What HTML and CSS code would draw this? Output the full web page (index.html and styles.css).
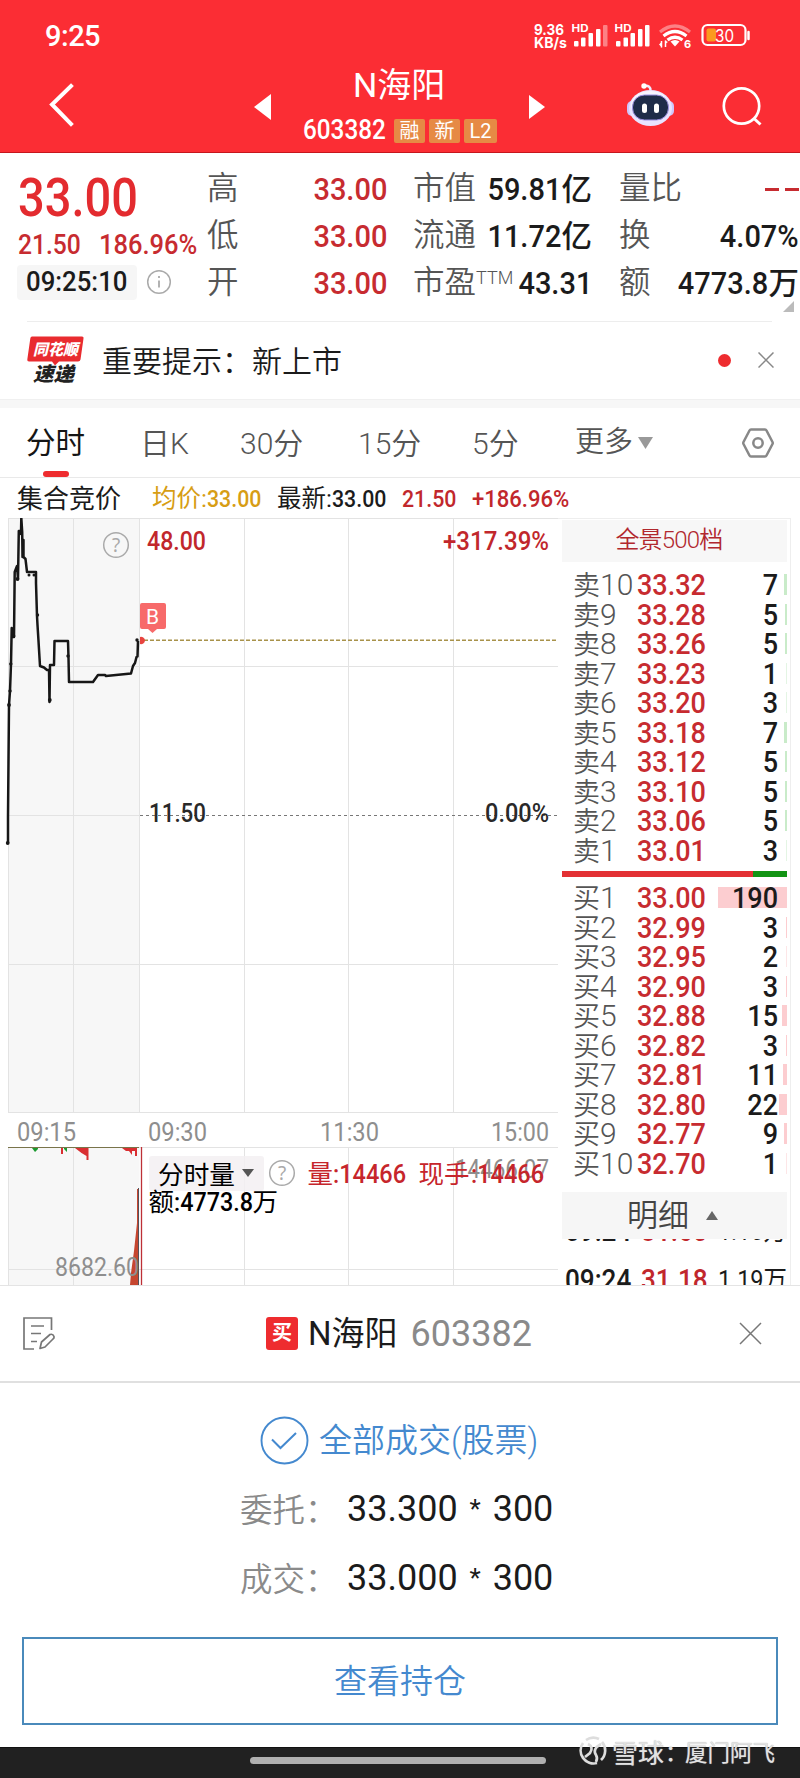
FILE: index.html
```html
<!DOCTYPE html>
<html lang="zh-CN">
<head>
<meta charset="utf-8">
<title>N海阳 603382</title>
<link rel="stylesheet" href="styles.css">
</head>
<body>
<header class="top">
  <div class="status">
    <span class="clock">9:25</span>
    <svg class="status-icons" width="220" height="32" viewBox="532 20 220 32">
      <g fill="#fff" font-family="Inter" font-weight="700">
        <text x="534" y="34.500" font-size="15" textLength="30" lengthAdjust="spacingAndGlyphs">9.36</text>
        <text x="534" y="48" font-size="14.500" textLength="33" lengthAdjust="spacingAndGlyphs">KB/s</text>
        <text x="571.500" y="32" font-size="10.500" textLength="17" lengthAdjust="spacingAndGlyphs">HD</text>
        <text x="614.500" y="32" font-size="10.500" textLength="17" lengthAdjust="spacingAndGlyphs">HD</text>
        <text x="684" y="48" font-size="11">6</text>
      </g>
      <g fill="#fff">
        <rect x="574" y="41" width="4.500" height="5.500" rx="1"/><rect x="581" y="37.500" width="4.500" height="9" rx="1"/><rect x="588.500" y="33" width="4.500" height="13.500" rx="1"/><rect x="596" y="29" width="4.500" height="17.500" rx="1"/><rect x="603" y="25" width="4.500" height="21.500" rx="1" opacity=".4"/>
        <rect x="616" y="41" width="4.500" height="5.500" rx="1"/><rect x="623.500" y="37.500" width="4.500" height="9" rx="1"/><rect x="630.500" y="33" width="4.500" height="13.500" rx="1"/><rect x="638" y="29" width="4.500" height="17.500" rx="1"/><rect x="645" y="25" width="4.500" height="21.500" rx="1"/>
        <path d="M675 46.500l-4.500-5q4.500-3 9 0z"/>
        <path d="M659 44.500l3-3v6zM668 42l-3 2v-3.500"/>
      </g>
      <g fill="none" stroke="#fff" stroke-width="3.200">
        <path d="M660 32q15-12 30 0" opacity=".4"/>
        <path d="M663.500 36q11.500-9 23 0"/><path d="M667.500 40q7.500-5.500 15 0"/>
        <path d="M661.500 41v6.500M665.500 47v-6.500" stroke-width="1.500"/>
      </g>
      <rect x="702.500" y="25" width="43" height="20" rx="5" fill="none" stroke="#fff" stroke-width="2.200"/>
      <rect x="706.500" y="28.500" width="9.500" height="13" rx="2" fill="#fb9a1e"/>
      <path d="M748.500 32v7" stroke="#fff" stroke-width="2.500" stroke-linecap="round"/>
      <text x="715" y="42" font-family="Inter" font-size="17" fill="#fff" textLength="19" lengthAdjust="spacingAndGlyphs">30</text>
    </svg>
  </div>
  <div class="nav">
    <svg width="26" height="44" viewBox="0 0 26 44"><path d="M23 3 4 21.500 23 41" fill="none" stroke="#fff" stroke-width="4" stroke-linecap="square"/></svg>
    <svg class="prev" width="18" height="26" viewBox="0 0 18 26"><path d="M17 0v26L0 13z" fill="#fff"/></svg>
    <div class="stock">
      <div class="stock-name">N海阳</div>
      <div class="stock-code"><span class="num">603382</span><i>融</i><i>新</i><i class="l2">L2</i></div>
    </div>
    <svg class="next" width="16" height="24" viewBox="0 0 16 24"><path d="M0 0v24l16-12z" fill="#fff"/></svg>
    <svg class="bot" width="48" height="46" viewBox="626 82 48 46">
      <path d="M644 86q7-1 6.500 5" fill="none" stroke="#f0ecff" stroke-width="2.500"/><circle cx="644" cy="86" r="2.700" fill="#fff"/>
      <rect x="627" y="101" width="10" height="15" rx="5" fill="#cfc6fb"/><rect x="664" y="101" width="10" height="15" rx="5" fill="#cfc6fb"/>
      <ellipse cx="650.500" cy="108" rx="21.500" ry="18" fill="#e9e3ff"/><ellipse cx="650" cy="105" rx="19" ry="14" fill="#f7f5ff"/>
      <rect x="632.500" y="95" width="36" height="25" rx="12" fill="#1f2c49" stroke="#9c91e0" stroke-width="1"/>
      <rect x="642" y="103.500" width="5" height="9.500" rx="2.500" fill="#fff"/><rect x="654" y="103.500" width="5" height="9.500" rx="2.500" fill="#fff"/>
    </svg>
    <svg class="search" width="42" height="42" viewBox="721 85 42 42"><circle cx="741.500" cy="106" r="17.700" fill="none" stroke="#fff" stroke-width="2.700"/><path d="m754 118.500 6.500 6" stroke="#fff" stroke-width="3"/></svg>
  </div>
</header>

<section class="quote">
  <div class="main-quote">
    <div class="big num">33.00</div>
    <div class="chg"><span class="num">21.50</span><span class="num">186.96%</span></div>
    <div class="time"><span class="pill"><span class="num">09:25:10</span></span>
      <svg width="26" height="26" viewBox="0 0 26 26"><circle cx="13" cy="13" r="11.300" fill="none" stroke="#aaa" stroke-width="1.500"/><path d="M13 11.500v7M13 7v2" stroke="#aaa" stroke-width="1.800"/></svg></div>
  </div>
  <dl class="facts red"><dt>高</dt><dd><span class="num r">33.00</span></dd><dt>低</dt><dd><span class="num r">33.00</span></dd><dt>开</dt><dd><span class="num r">33.00</span></dd></dl>
  <dl class="facts"><dt>市值</dt><dd><span class="num r">59.81</span><b>亿</b></dd><dt>流通</dt><dd><span class="num r">11.72</span><b>亿</b></dd><dt>市盈<sup>TTM</sup></dt><dd><span class="num r">43.31</span></dd></dl>
  <dl class="facts"><dt>量比</dt><dd class="dash"><i></i><i></i></dd><dt>换</dt><dd><span class="num r">4.07%</span></dd><dt>额</dt><dd><span class="num r">4773.8</span><b>万</b></dd></dl>
  <svg class="corner" width="11" height="11" viewBox="0 0 11 11"><path d="M11 0v11H0z" fill="#bbb"/></svg>
</section>

<section class="notice">
  <svg width="58" height="50" viewBox="27 336 58 50">
    <path d="M32 337.500h50q2 0 1.500 2l-3 21q-.4 2-2.500 2H59l-4 4-3-4H29q-2 0-1.700-2l3-21q.3-2 1.700-2z" fill="#e92b2f"/>
    <g font-family="Noto Sans CJK SC" font-weight="900" font-style="italic"><text x="33" y="356" font-size="15.500" fill="#fff" textLength="45" lengthAdjust="spacingAndGlyphs">同花顺</text>
    <text x="33" y="382" font-size="19.500" fill="#222" textLength="41" lengthAdjust="spacingAndGlyphs">速递</text></g>
  </svg>
  <span class="notice-text">重要提示：新上市</span>
  <span class="dot"></span>
  <svg width="16" height="16" viewBox="0 0 16 16"><path d="m.5.500 15 15m0-15-15 15" stroke="#888" stroke-width="1.500"/></svg>
</section>

<nav class="tabs">
  <span class="on">分时</span><span>日K</span><span>30分</span><span>15分</span><span>5分</span><span class="more">更多<svg width="15" height="12" viewBox="0 0 15 12"><path d="M0 0h15L7.500 12z" fill="#999"/></svg></span>
  <svg width="32" height="30" viewBox="0 0 32 30"><path d="M9 1.500h14q1 0 1.500 1l6 11.500q.5 1 0 2l-6 11.500q-.5 1-1.500 1H9q-1 0-1.500-1L1.500 16q-.5-1 0-2l6-11.500q.5-1 1.500-1z" fill="none" stroke="#888" stroke-width="2.500"/><circle cx="16" cy="15" r="4.700" fill="none" stroke="#888" stroke-width="2.500"/></svg>
</nav>

<div class="info">
  <span class="auction">集合竞价</span>
  <span class="avg">均价:<span class="num">33.00</span></span>
  <span>最新:<span class="num">33.00</span></span>
  <span class="up num">21.50</span><span class="up num pct">+186.96%</span>
</div>

<main class="market">
  <svg class="chart" width="550" height="767" viewBox="8 518 550 767">
    <path d="M8 518h131.500v594H8zM8 1147h131.500v138H8z" fill="#f7f7f7"/>
    <path d="M8.500 518v594M73.500 518v594M139.500 518v594M244.500 518v594M348.500 518v594M453.500 518v594M8.500 1147v138M73.500 1147v138M244.500 1147v138M348.500 1147v138M453.500 1147v138M8 518.500h550M8 666.500h550M8 815.500h131M8 964.500h550M8 1112.500h550M8 1147.500h550M8 1269.500h550" fill="none" stroke="#e3e3e3"/>
    <path d="M140 815.500h418" stroke="#777" stroke-dasharray="3 3"/>
    <path d="M144 640.300h414" stroke="#a8924a" stroke-width="1.400" stroke-dasharray="4 2"/>
    <path d="M8 843V816L9 705l1-14 1-27 .7-36 .3 9h2l.7-65 2.300-6 1 13 .8-48h2.200v3l.3-16 .9 14 .3 25 1-17v17l2 2 1.500 13h9v11l1 33 .5 9 1 16 1.500 25 4 1.500 3 2.500h2l.5 32 .5-37h4l.5-24H68l.5 17 .5 24h24l5-7h7l1 1 25-2.500 2-7.500 2-3 1.500-6 1-.5.500-15.500" fill="none" stroke="#171717" stroke-width="2.500" stroke-linejoin="round"/>
    <g fill="#171717"><circle cx="7.700" cy="843" r="1.900"/><circle cx="9" cy="705" r="1.900"/><circle cx="10" cy="691" r="1.700"/><circle cx="10.800" cy="664" r="1.700"/><circle cx="13.500" cy="636" r="1.900"/><circle cx="17.500" cy="579" r="1.900"/><circle cx="29" cy="575" r="1.500"/><circle cx="34" cy="575" r="1.500"/><circle cx="37.500" cy="615" r="1.700"/><circle cx="49.800" cy="700" r="1.900"/><circle cx="68" cy="656" r="1.700"/><circle cx="137" cy="640" r="1.700"/></g>
    <path d="M140 637a4 4 0 0 1 5 3.500 4 4 0 0 1-5 3.500z" fill="#e8443f"/>
    <path d="M142 603h22q2 0 2 2v22q0 2-2 2h-7l-4.500 4-4.500-4h-6q-2 0-2-2v-22q0-2 2-2z" fill="#f76a6a"/>
    <text x="146" y="624" fill="#fff" font-size="21" font-family="Roboto">B</text>
    <g fill="none" stroke="#aaa" stroke-width="1.500"><circle cx="116" cy="545" r="12.300"/><circle cx="282" cy="1173" r="12.300"/></g>
    <g font-family="Noto Sans" font-size="19" fill="#aaa" text-anchor="middle"><text x="116" y="552">?</text><text x="282" y="1180">?</text></g>
    <g class="svgnum">
      <g fill="#c1272c"><text x="147" y="550" textLength="59" lengthAdjust="spacingAndGlyphs">48.00</text><text x="443" y="550" textLength="106" lengthAdjust="spacingAndGlyphs">+317.39%</text></g>
      <g fill="#292929"><text x="149" y="821.500" textLength="57" lengthAdjust="spacingAndGlyphs">11.50</text><text x="485" y="821.500" textLength="64" lengthAdjust="spacingAndGlyphs">0.00%</text></g>
      <g class="axis"><text x="17" y="1140.500" textLength="59" lengthAdjust="spacingAndGlyphs">09:15</text><text x="148" y="1140.500" textLength="59" lengthAdjust="spacingAndGlyphs">09:30</text><text x="320" y="1140.500" textLength="59" lengthAdjust="spacingAndGlyphs">11:30</text><text x="491" y="1140.500" textLength="58" lengthAdjust="spacingAndGlyphs">15:00</text></g>
    </g>
    <path d="M8 1147.500h131" stroke="#79744a"/>
    <path d="M32 1148l3 4 3-3v-1zM64 1148h3v4l-3-3z" fill="#1b9a2f"/><path d="M61 1148h2v6h-2zM75 1148h13.500v12h-2v-4l-5-3zM122 1148h15v8h-2v-5h-3v4l-3-4h-3z" fill="#d92e31"/>
    <path d="M130 1285l1-12 3-22 3-28v-34h2v96z" fill="#c64630"/><path d="M138.500 1188v97" stroke="#54515a"/><path d="M141.500 1147v138" stroke="#bd3036" stroke-width="1.300"/>
    <rect x="149" y="1156" width="115" height="35" rx="3" fill="#f3f0f2" fill-opacity=".85"/>
    <g class="svgnum"><g class="axis"><text x="55" y="1275.500" textLength="84" lengthAdjust="spacingAndGlyphs">8682.60</text><text x="455" y="1178" textLength="94" lengthAdjust="spacingAndGlyphs">14466.07</text></g></g>
    <g class="svgcjk">
      <text x="158" y="1183.500" textLength="77" lengthAdjust="spacingAndGlyphs">分时量</text>
      <path d="M242 1169h12l-6 8z" fill="#555"/>
      <text x="148.500" y="1210.500">额</text><text x="252.500" y="1210.500">万</text>
      <g fill="#c6252b"><text x="307.500" y="1182.500">量</text><text x="418.500" y="1182.500">现手</text></g>
    </g>
    <g class="svgnum"><text x="174" y="1211" textLength="79" lengthAdjust="spacingAndGlyphs">:4773.8</text><g fill="#c6252b"><text x="333" y="1182.500" textLength="73" lengthAdjust="spacingAndGlyphs">:14466</text><text x="471" y="1182.500" textLength="73" lengthAdjust="spacingAndGlyphs">:14466</text></g></g>
  </svg>

  <aside class="book">
    <div class="book-head">全景500档</div>
    <div class="side sell">
      <div><span>卖<u>10</u></span><span class="num">33.32</span><span class="num r">7</span><i class="w2"></i></div>
      <div><span>卖<u>9</u></span><span class="num">33.28</span><span class="num r">5</span><i></i></div>
      <div><span>卖<u>8</u></span><span class="num">33.26</span><span class="num r">5</span><i></i></div>
      <div><span>卖<u>7</u></span><span class="num">33.23</span><span class="num r">1</span><i class="w0"></i></div>
      <div><span>卖<u>6</u></span><span class="num">33.20</span><span class="num r">3</span><i class="w0"></i></div>
      <div><span>卖<u>5</u></span><span class="num">33.18</span><span class="num r">7</span><i class="w2"></i></div>
      <div><span>卖<u>4</u></span><span class="num">33.12</span><span class="num r">5</span><i></i></div>
      <div><span>卖<u>3</u></span><span class="num">33.10</span><span class="num r">5</span><i></i></div>
      <div><span>卖<u>2</u></span><span class="num">33.06</span><span class="num r">5</span><i></i></div>
      <div><span>卖<u>1</u></span><span class="num">33.01</span><span class="num r">3</span><i class="w0"></i></div>
    </div>
    <div class="ratio"></div>
    <div class="side buy">
      <div><span>买<u>1</u></span><span class="num">33.00</span><span class="num r">190</span><i class="w69"></i></div>
      <div><span>买<u>2</u></span><span class="num">32.99</span><span class="num r">3</span><i></i></div>
      <div><span>买<u>3</u></span><span class="num">32.95</span><span class="num r">2</span><i class="w0"></i></div>
      <div><span>买<u>4</u></span><span class="num">32.90</span><span class="num r">3</span><i></i></div>
      <div><span>买<u>5</u></span><span class="num">32.88</span><span class="num r">15</span><i class="w5"></i></div>
      <div><span>买<u>6</u></span><span class="num">32.82</span><span class="num r">3</span><i></i></div>
      <div><span>买<u>7</u></span><span class="num">32.81</span><span class="num r">11</span><i class="w4"></i></div>
      <div><span>买<u>8</u></span><span class="num">32.80</span><span class="num r">22</span><i class="w8"></i></div>
      <div><span>买<u>9</u></span><span class="num">32.77</span><span class="num r">9</span><i class="w3"></i></div>
      <div><span>买<u>10</u></span><span class="num">32.70</span><span class="num r">1</span><i class="w0"></i></div>
    </div>
    <div class="detail-head">明细<svg width="12" height="9" viewBox="0 0 12 9"><path d="M0 9 6 0l6 9z" fill="#666"/></svg></div>
    <div class="ticks">
      <div><span class="num">09:24</span><span class="num up">31.60</span><span class="num r">1.16<em>万</em></span></div>
      <div><span class="num">09:24</span><span class="num up">31.18</span><span class="num r">1.19<em>万</em></span></div>
    </div>
  </aside>
</main>

<section class="sheet">
  <div class="sheet-head">
    <svg width="33" height="34" viewBox="0 0 33 34"><path d="M28.500 13V1H1v31h10M8 9h13M8 16.500h10M8 24.500h6" fill="none" stroke="#777" stroke-width="1.700"/><path d="m17 31.500 1.500-6.500L27 17.500q3-1 4 2 .5 1.500-1 2.500L22 30z" fill="none" stroke="#777" stroke-width="1.700" stroke-linejoin="round"/></svg>
    <div class="sheet-title"><i>买</i><span class="name">N海阳</span><span class="code">603382</span></div>
    <svg width="23" height="23" viewBox="0 0 23 23"><path d="m1 1 21 21m0-21L1 22" stroke="#777" stroke-width="1.500"/></svg>
  </div>
  <div class="done"><svg width="49" height="49" viewBox="0 0 49 49"><circle cx="24.500" cy="24.500" r="23" fill="none" stroke="#4489cf" stroke-width="1.900"/><path d="m12 23.500 8.500 8.500L36 17" fill="none" stroke="#4489cf" stroke-width="2"/></svg><span>全部成交(股票)</span></div>
  <div class="order"><span>委托：</span><strong>33.300</strong><em>*</em><strong>300</strong></div>
  <div class="order"><span>成交：</span><strong>33.000</strong><em>*</em><strong>300</strong></div>
  <div class="button">查看持仓</div>
</section>
<footer>
  <div class="home"></div>
  <div class="mark"><svg width="30" height="30" viewBox="0 0 30 30"><g fill="none" stroke="#ddd" stroke-width="2.700"><path d="M8 4a13 13 0 0 1 13-1M5 7a13 13 0 0 0 14 20M24 6a13 13 0 0 1-1 18"/><path d="M10 8q6 3 2 9l-5 4M23 8q-9 5-5 11 2 3 0 7"/></g></svg><span class="xq">雪球</span><span class="cl">：</span><span>厦门阿飞</span></div>
</footer>
</body>
</html>
```
FILE: styles.css
```css
* { box-sizing: border-box; }
body { margin: 0; width: 800px; background: #fff; color: #1b1b1b; font-family: Roboto, "Noto Sans CJK SC", sans-serif; font-weight: 400; overflow-x: hidden; }
i, em { font-style: normal; }
u { text-decoration: none; }
svg { display: block; flex: none; }
.num { font-family: Roboto, "Noto Sans CJK SC", sans-serif; font-weight: 500; display: inline-block; transform: scaleX(.9); transform-origin: left center; white-space: nowrap; }
.num.r { transform-origin: right center; }
.up { color: #c1272c; }

.top { height: 153px; background: #fb2d34; color: #fff; border-bottom: 1px solid #c5161d; }
.status { height: 64px; padding: 20px 48px 0 45px; display: flex; justify-content: space-between; }
.clock { font-size: 29px; line-height: 33px; font-weight: 500; letter-spacing: -.5px; }
.nav { height: 88px; display: flex; padding-left: 48px; align-items: flex-start; }
.nav > svg:first-child { margin-top: 19px; }
.prev { margin: 30px 0 0 180px; }
.stock { width: 200px; margin-left: 31px; }
.stock-name { height: 41px; margin-left: 50px; font-size: 34px; line-height: 42px; white-space: nowrap; }
.stock-code { display: flex; align-items: center; height: 50px; }
.stock-code .num { font-size: 27px; width: 91px; flex: none; line-height: 54px; transform: scaleX(.9); }
.stock-code i { flex: none; width: 31px; height: 24px; margin: 2px 4px 0 0; background: #e68a45; border-radius: 2px; font-size: 20px; line-height: 24px; text-align: center; }
.stock-code i.l2 { width: 33px; }
.next { margin: 31px 0 0 26px; }
.bot { margin: 18px 0 0 81px; }
.search { margin: 21px 0 0 47px; }

.quote { position: relative; height: 168px; display: grid; grid-template-columns: 190px 178px 178px 178px; padding: 12px 0 0 18px; justify-content: start; }
.quote .facts + .facts { margin-left: 28px; margin-right: -28px; }
.quote .facts + .facts + .facts { margin-left: 56px; margin-right: -57px; }
.big { height: 64px; font-size: 54px; line-height: 66px; color: #e32b2f; transform: scaleX(.87); }
.chg { display: flex; height: 31px; line-height: 31px; font-size: 28px; color: #c72b30; white-space: nowrap; }
.chg .num:first-child { width: 81px; }
.chg .num { transform: scaleX(.88); }
.chg .num + .num { transform: scaleX(.91); }
.time { display: flex; align-items: center; margin-top: 4px; height: 36px; gap: 9px; }
.pill { width: 120px; height: 35px; background: #f6f6f6; border-radius: 4px; padding-left: 9px; margin-left: -1px; font-size: 28px; line-height: 34px; }
.pill .num { transform: scaleX(.92); }
.facts { margin: 0; display: grid; grid-template-columns: 50px 1fr; grid-auto-rows: 47px; line-height: 47px; }
.facts dt { color: #555; font-size: 31.500px; font-weight: 350; white-space: nowrap; margin-left: -1px; }
.facts dt sup { font-size: 18px; line-height: 0; vertical-align: 9px; }
.facts dd { margin: 0; font-size: 31.500px; display: flex; justify-content: flex-end; white-space: nowrap; padding-top: 1px; }
.facts dd .num { transform: scaleX(.92); }
.facts.red .num { position: relative; left: 1px; }
.facts.red { color: #c72b30; }
.facts b { font-weight: 500; font-size: 30.500px; }
.facts .dash { gap: 6px; align-items: center; }
.dash i { width: 14px; height: 3px; background: #c72b30; }
.corner { position: absolute; right: 6px; bottom: 9px; }

.notice { height: 79px; display: flex; align-items: center; padding-left: 27px; background: linear-gradient(#ededed, #ededed) 27px 0 / 745px 1px no-repeat; border-bottom: 1px solid #f0f0f0; }
.notice-text { margin: -3px 0 0 17px; font-size: 30px; font-weight: 350; width: 616px; }
.dot { width: 13px; height: 13px; border-radius: 50%; background: #ee2c2f; margin-right: 27px; }
.tabs { height: 78px; border-top: 8px solid #f7f7f7; border-bottom: 1px solid #e9e9e9; display: grid; grid-template-columns: 114px 100px 118px 114px 103px 167px 32px; padding-left: 26px; align-items: center; font-size: 30px; color: #555; }
.tabs span { line-height: 71px; height: 69px; font-weight: 350; }
.tabs .on { color: #151515; font-weight: 400; font-size: 29.500px; position: relative; }
.tabs .on::after { content: ""; position: absolute; left: 17px; bottom: 0; width: 26px; height: 6px; border-radius: 3px; background: #ee2c2f; }
.tabs .more { display: flex; align-items: center; gap: 5px; font-size: 29px; }
.info { height: 40px; padding-left: 17px; display: grid; grid-template-columns: 135px 125px 125px 70px 110px; line-height: 42px; font-size: 24.500px; white-space: nowrap; }
.auction { font-size: 26px; }
.info .avg { color: #d79d14; }
.info .num { transform: scaleX(.87); }
.info .pct { transform: scaleX(.9); }

.market { height: 767px; display: flex; padding-left: 8px; overflow: hidden; }
.chart { overflow: visible; }
.svgnum { font-family: Roboto; font-size: 25px; font-weight: 500; }
.svgnum .axis { font-weight: 400; fill: #8e8e8e; }
.svgcjk { font-family: "Noto Sans CJK SC"; font-size: 25.5px; }
.book { width: 233px; border-right: 1px solid #eee; border-top: 1px solid #eee; padding: 1px 3px 0 4px; }
.book-head { height: 42px; background: #f7f7f7; color: #b1282e; font-size: 24px; letter-spacing: -.8px; font-weight: 350; line-height: 41px; text-align: center; padding-right: 11px; }
.side > div { position: relative; height: 29.55px; display: grid; grid-template-columns: 64px 88px 53px; padding-left: 11px; line-height: 30.5px; font-size: 30px; white-space: nowrap; }
.side span:first-child { font-size: 27px; color: #555; font-weight: 350; }
.side u { font-size: 30px; }
.side .num:nth-child(2) { color: #c72b30; }
.side .num.r { text-align: right; z-index: 1; }
.side i { position: absolute; right: 0; top: 4px; height: 21px; width: 2px; background: #c9ebc9; }
.buy i { background: #fccdd0; width: 1px; }
.side i.w0 { width: 1px; opacity: .5; }
.side i.w2, .side i.w3 { width: 3px; }
.side i.w4 { width: 4px; }
.side i.w5 { width: 5px; }
.side i.w8 { width: 8px; }
.side i.w69 { width: 69px; }
.sell { padding-top: 8px; height: 309px; }
.ratio { height: 6px; background: linear-gradient(90deg, #e33134 85%, #129414 85%); }
.buy { padding-top: 6px; height: 315px; }
.detail-head { height: 47px; background: #f6f6f6; display: flex; align-items: center; padding-left: 65px; gap: 17px; font-size: 31px; font-weight: 350; color: #444; line-height: 49px; }
.ticks { height: 46px; overflow: hidden; }
.ticks div { display: grid; grid-template-columns: 76px 70px 69px; height: 40px; line-height: 40px; font-size: 29px; margin-left: 3px; white-space: nowrap; }
.ticks div:first-child { margin-top: -28px; height: 49px; }
.ticks .num.r { font-size: 26px; text-align: right; font-weight: 400; }

.sheet { height: 462px; border-top: 1px solid #e4e4e4; }
.sheet-head { height: 97px; border-bottom: 2px solid #e0e0e0; display: flex; align-items: center; padding: 0 38px 0 23px; }
.sheet-title { display: flex; align-items: center; flex: 1; line-height: 62px; margin-left: 210px; }
.sheet-title i { width: 32px; height: 33px; background: #ee2c2f; color: #fff; border-radius: 3px; font-size: 20px; line-height: 32px; text-align: center; font-weight: 700; }
.name { margin-left: 10px; font-size: 33px; }
.code { margin-left: 13px; font-size: 36px; color: #8a8a8a; }
.done { margin: 33px 0 0 260px; height: 49px; display: flex; align-items: center; gap: 10px; color: #4489cf; font-size: 33px; font-weight: 350; white-space: nowrap; line-height: 46px; }
.order { height: 69px; padding-left: 240px; display: flex; align-items: center; white-space: nowrap; }
.done + .order { margin-top: 9px; }
.order span { width: 107px; font-size: 32.500px; color: #8a8a8a; font-weight: 350; margin-top: -3px; }
.order strong { font-size: 36px; font-weight: 400; }
.order em { width: 35px; text-align: center; font-size: 26px; }
.button { margin: 25px 22px 0; height: 88px; border: 2px solid #4a8abb; color: #4489cf; text-align: center; font-size: 33px; line-height: 85px; font-weight: 350; }
footer { height: 31px; background: #212121; position: relative; border-top: 1px solid #111; }
.home { position: absolute; left: 250px; top: 9px; width: 296px; height: 7px; border-radius: 4px; background: #b0b0b0; }
.mark { position: absolute; left: 578px; top: -14px; height: 34px; display: flex; align-items: center; color: #e2e2e2; font-size: 22.500px; white-space: nowrap; text-shadow: 0 0 1px #aaa; }
.xq { font-size: 26px; font-weight: 400; margin-left: 4px; width: 53px; }
.cl { width: 20px; }
```
